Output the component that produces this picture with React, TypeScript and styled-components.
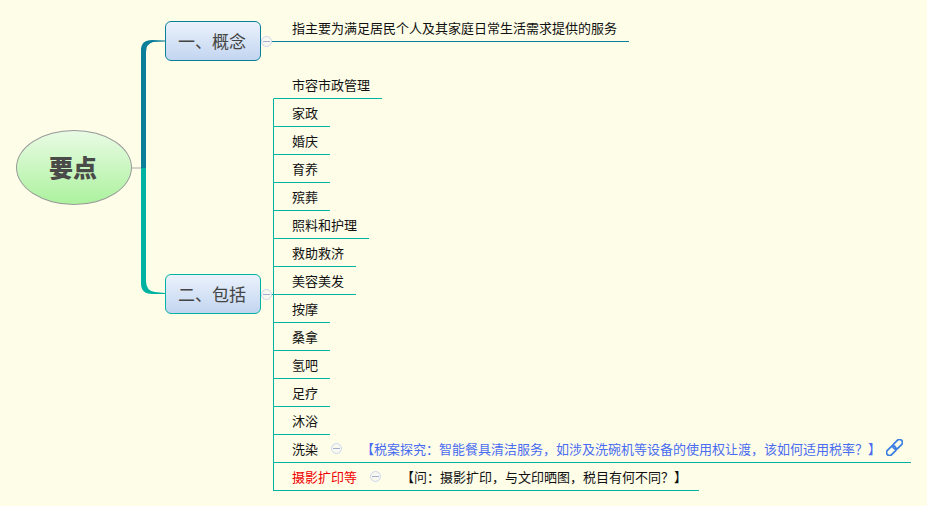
import React from 'react';
import styled, { createGlobalStyle } from 'styled-components';

const GlobalStyle = createGlobalStyle`
  html, body {
    margin: 0;
    padding: 0;
    background: #fefde8;
  }
`;

const Canvas = styled.div`
  position: relative;
  width: 927px;
  height: 506px;
  overflow: hidden;
  background: #fefde8;
  font-family: "Noto Sans CJK SC", "Noto Sans", sans-serif;
  font-size: 13px;
  color: #111;
`;

const Connectors = styled.svg`
  position: absolute;
  left: 0;
  top: 0;
`;

const RootNode = styled.div`
  position: absolute;
  left: 16px;
  top: 130px;
  box-sizing: border-box;
  width: 116px;
  height: 75px;
  display: flex;
  align-items: center;
  justify-content: center;
  padding: 0 2px 2px 0;
  border: 1px solid #999;
  border-radius: 50%;
  background: linear-gradient(#e9fbe4, #acf29e);
  color: #4a4a48;
  font-size: 24px;
  font-weight: 900;
`;

const TopicNode = styled.div<{ $top: number; $border: string }>`
  position: absolute;
  left: 165px;
  top: ${(p) => p.$top}px;
  box-sizing: border-box;
  width: 96px;
  height: 40px;
  display: flex;
  align-items: center;
  justify-content: center;
  padding: 0 2px 2px 0;
  border: 1px solid ${(p) => p.$border};
  border-radius: 6px;
  background: linear-gradient(#ebf2fc, #c2d5f0);
  color: #444;
  font-size: 17px;
`;

const Collapse = styled.span`
  position: relative;
  flex: none;
  box-sizing: border-box;
  display: block;
  width: 11px;
  height: 11px;
  border: 1px solid #ccd6f0;
  border-radius: 50%;
  background: #f8f8ef;

  &::after {
    content: '';
    position: absolute;
    left: 1px;
    right: 1px;
    top: 4px;
    height: 1px;
    background: #a2aed2;
  }
`;

const TopicCollapse = styled(Collapse)`
  position: absolute;
  left: 95px;
  top: 14px;
  z-index: 1;
`;

const LeafList = styled.div<{ $left: number; $top: number }>`
  position: absolute;
  left: ${(p) => p.$left}px;
  top: ${(p) => p.$top}px;
  display: flex;
  flex-direction: column;
  align-items: flex-start;
`;

const Leaf = styled.div<{ $line: string; $spine?: boolean }>`
  box-sizing: border-box;
  height: 28px;
  display: flex;
  align-items: center;
  padding: 0 12px 1px 18px;
  border-bottom: 1px solid ${(p) => p.$line};
  border-left: 1px solid ${(p) => (p.$spine ? p.$line : 'transparent')};
  white-space: nowrap;
`;

const LeafText = styled.span<{ $color?: string }>`
  color: ${(p) => p.$color || '#111'};
`;

const LeafCollapse = styled(Collapse)<{ $gap: number }>`
  margin-left: ${(p) => p.$gap}px;
`;

const Note = styled.span<{ $color: string; $gap: number }>`
  margin-left: ${(p) => p.$gap}px;
  color: ${(p) => p.$color};
`;

const ChainIcon = styled.svg`
  flex: none;
  margin: -2px -4px 0 5px;
`;

const TEAL = '#00b2a2';
const BLUE_TEAL = '#0b7f9a';

const plainLeaves = [
  '家政',
  '婚庆',
  '育养',
  '殡葬',
  '照料和护理',
  '救助救济',
  '美容美发',
  '按摩',
  '桑拿',
  '氢吧',
  '足疗',
  '沐浴',
];

function Chain() {
  return (
    <ChainIcon width={17} height={17} viewBox="0 0 17 17" fill="none" stroke="#3d7fe0" strokeWidth={1.8}>
      <g transform="rotate(-45 8.5 8.5)">
        <rect x={-1.5} y={5.5} width={11} height={6} rx={3} />
        <rect x={7.5} y={5.5} width={11} height={6} rx={3} />
      </g>
    </ChainIcon>
  );
}

export default function App() {
  return (
    <Canvas>
      <GlobalStyle />
      <Connectors width={927} height={506}>
        <line x1={132} y1={168} x2={142} y2={168} stroke="#aaa" />
        <path
          d="M141 168 V50 Q141 40 152 40 L165 40.5 V41.5 L153 42 Q146 44 146 52 V168 Z"
          fill={BLUE_TEAL}
        />
        <path
          d="M141 168 V283 Q141 294 152 294 L165 294 V293 L155 292 Q146 291 146 281 V168 Z"
          fill={TEAL}
        />
        <line x1={271} y1={294.5} x2={274} y2={294.5} stroke={TEAL} />
        <line x1={271} y1={41.5} x2={274} y2={41.5} stroke={BLUE_TEAL} />
      </Connectors>

      <RootNode>要点</RootNode>

      <TopicNode $top={21} $border={BLUE_TEAL}>
        一、概念
        <TopicCollapse />
      </TopicNode>
      <TopicNode $top={274} $border={TEAL}>
        二、包括
        <TopicCollapse />
      </TopicNode>

      <LeafList $left={273} $top={14}>
        <Leaf $line={BLUE_TEAL}>
          <LeafText>指主要为满足居民个人及其家庭日常生活需求提供的服务</LeafText>
        </Leaf>
      </LeafList>

      <LeafList $left={273} $top={71}>
        <Leaf $line={TEAL}>
          <LeafText>市容市政管理</LeafText>
        </Leaf>
        {plainLeaves.map((name) => (
          <Leaf key={name} $line={TEAL} $spine>
            <LeafText>{name}</LeafText>
          </Leaf>
        ))}
        <Leaf $line={TEAL} $spine>
          <LeafText>洗染</LeafText>
          <LeafCollapse $gap={13} />
          <Note $color="#4a6cf0" $gap={19}>
            【税案探究：智能餐具清洁服务，如涉及洗碗机等设备的使用权让渡，该如何适用税率？】
          </Note>
          <Chain />
        </Leaf>
        <Leaf $line={TEAL} $spine>
          <LeafText $color="#f00000">摄影扩印等</LeafText>
          <LeafCollapse $gap={13} />
          <Note $color="#111" $gap={20}>
            【问：摄影扩印，与文印晒图，税目有何不同？】
          </Note>
        </Leaf>
      </LeafList>
    </Canvas>
  );
}
